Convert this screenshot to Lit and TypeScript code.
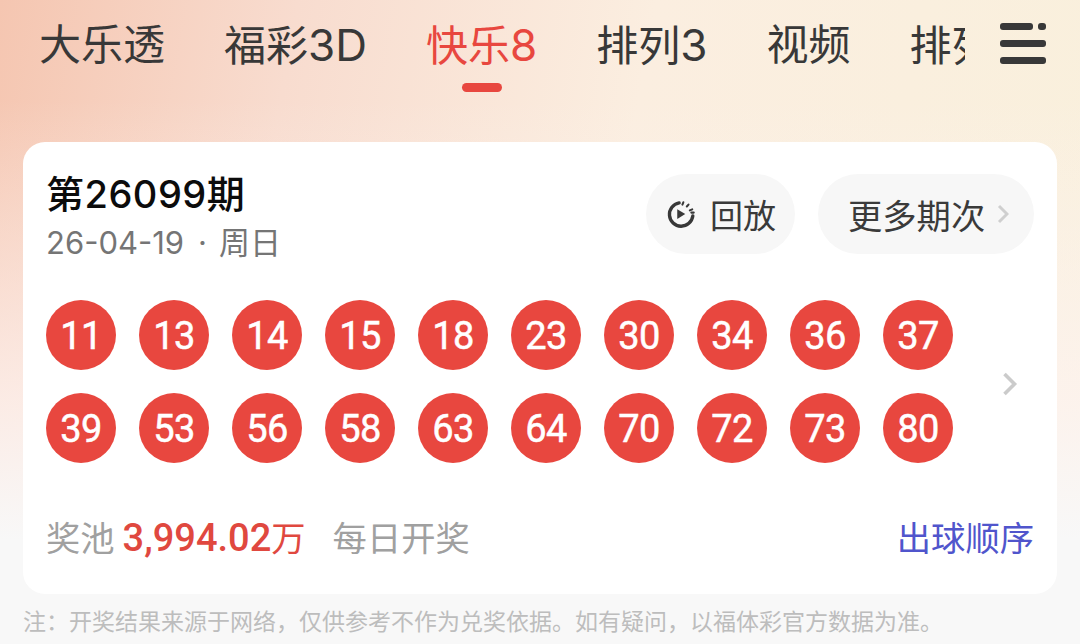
import { LitElement, html, css, svg } from "lit";
import { customElement } from "lit/decorators.js";

const TABS = [
  ["大乐透", ""],
  ["福彩", "3D"],
  ["快乐", "8"],
  ["排列", "3"],
  ["视频", ""],
  ["排列", "5"],
];
const ROWS = [
  ["11", "13", "14", "15", "18", "23", "30", "34", "36", "37"],
  ["39", "53", "56", "58", "63", "64", "70", "72", "73", "80"],
];

@customElement("app-root")
export class AppRoot extends LitElement {
  static styles = css`
    :host {
      display: block;
      width: 1080px;
      height: 644px;
      overflow: hidden;
      font-family: "Inter", "Noto Sans CJK SC", "Noto Sans", sans-serif;
      background:
        linear-gradient(180deg, rgba(253, 243, 240, 0) 100px, rgba(253, 243, 240, 0.8) 400px, #f8f8f8 540px),
        linear-gradient(100deg, #f5c6b1 0%, #f8dccf 25%, #fbeee0 55%, #f9f0dc 100%);
      background-color: #f8f8f8;
    }
    .header {
      height: 142px;
      display: flex;
      align-items: flex-start;
    }
    .tabs {
      width: 965px;
      padding-left: 39px;
      box-sizing: border-box;
      display: flex;
      gap: 59px;
      overflow: hidden;
      flex: none;
      height: 100px;
    }
    .tab {
      flex: none;
      display: flex;
      flex-direction: column;
      align-items: center;
      font-size: 42px;
      line-height: 50px;
      padding-top: 20px;
      color: #383838;
      white-space: nowrap;
    }
    .lat { font-size: 44px; }
    .tab.on { color: #e8473f; }
    .bar {
      width: 40px;
      height: 9px;
      border-radius: 5px;
      background: #e8473f;
      margin-top: 12px;
    }
    .menu {
      margin: 23px 0 0 35px;
      width: 46px;
      height: 41px;
      display: block;
      flex: none;
    }
    .card {
      margin: 0 23px;
      height: 452px;
      box-sizing: border-box;
      background: #fff;
      border-radius: 22px;
      padding: 29px 23px 0 23px;
      display: flex;
      flex-direction: column;
    }
    .top {
      display: flex;
      justify-content: space-between;
      height: 129px;
      flex: none;
    }
    .title {
      font-size: 38px;
      line-height: 46px;
      letter-spacing: 0.5px;
      color: #0c0c0c;
      font-weight: 500;
    }
    .date {
      font-size: 31px;
      line-height: 44px;
      color: #757575;
      margin-top: 4px;
    }
    .dot { margin: 0 12px 0 14px; }
    .actions { display: flex; gap: 23px; padding-top: 3px; }
    .pill {
      height: 80px;
      border-radius: 40px;
      background: #f7f7f7;
      display: flex;
      align-items: center;
      box-sizing: border-box;
      font-size: 33px;
      color: #3a3a3a;
    }
    .replay { width: 149px; padding-left: 20px; gap: 14px; }
    .more { width: 216px; padding-left: 30px; gap: 12px; font-size: 34.3px; }
    .mid { display: flex; flex: none; height: 163px; }
    .balls {
      display: flex;
      flex-direction: column;
      gap: 23px;
      flex: none;
    }
    .row { display: flex; gap: 23px; }
    .ball {
      width: 70px;
      height: 70px;
      box-sizing: border-box;
      padding-top: 2px;
      border-radius: 50%;
      background: #e8473f;
      color: #fff;
      font-family: "Roboto", sans-serif;
      font-size: 38px;
      letter-spacing: -0.6px;
      font-weight: 400;
      -webkit-text-stroke: 0.5px #fff;
      display: flex;
      align-items: center;
      justify-content: center;
    }
    .next { margin: 72px 0 0 49px; display: block; flex: none; }
    .bottom {
      margin-top: 48px;
      display: flex;
      align-items: center;
      justify-content: space-between;
      height: 50px;
      font-size: 34.3px;
      color: #a0a0a0;
    }
    .pool { display: flex; align-items: center; white-space: nowrap; }
    .amount {
      color: #e0483f;
      margin-left: 8px;
      display: flex;
      align-items: center;
    }
    .num {
      font-family: "Roboto", sans-serif;
      font-weight: 500;
      font-size: 38px;
      margin-top: 3px;
    }
    .daily { margin-left: 27px; }
    .order { color: #5055cc; }
    .note {
      margin: 11px 0 0 23px;
      font-size: 23px;
      line-height: 34px;
      color: #bdbdbd;
      white-space: nowrap;
    }
  `;

  private playIcon() {
    return html`<svg width="30" height="30" viewBox="0 0 32 32" fill="none">
      ${svg`<path d="M14 4.2A12.5 12.5 0 1 0 28.6 18" stroke="#383838" stroke-width="3.6" stroke-linecap="round"/>
      <path d="M18.5 3.5l-1 2.5M24 6l-1.8 2M28 11l-2.6 1.2M29.6 14.5h-2.6" stroke="#383838" stroke-width="2.2" stroke-linecap="round"/>
      <path d="M12 10.8l8.5 5.2-8.5 5.2z" fill="#383838"/>`}
    </svg>`;
  }

  render() {
    return html`
      <div class="header">
        <div class="tabs">
          ${TABS.map(
            ([cn, lat], i) => html`<div class="tab ${i === 2 ? "on" : ""}">
              <span>${cn}${lat ? html`<span class="lat">${lat}</span>` : ""}</span>
              ${i === 2 ? html`<div class="bar"></div>` : ""}
            </div>`
          )}
        </div>
        <svg class="menu" viewBox="0 0 46 41">
          <rect x="0" y="0" width="33" height="7" rx="3" fill="#383838"/>
          <rect x="38" y="0" width="8" height="7" rx="3" fill="#383838"/>
          <rect x="0" y="17" width="46" height="7" rx="3" fill="#383838"/>
          <rect x="0" y="34" width="46" height="7" rx="3" fill="#383838"/>
        </svg>
      </div>
      <div class="card">
        <div class="top">
          <div>
            <div class="title">第26099期</div>
            <div class="date">26-04-19<span class="dot">·</span>周日</div>
          </div>
          <div class="actions">
            <div class="pill replay">${this.playIcon()}<span>回放</span></div>
            <div class="pill more">
              <span>更多期次</span>
              <svg width="12" height="20" viewBox="0 0 12 20" fill="none">
                <path d="M2 2l8 8-8 8" stroke="#cfcfcf" stroke-width="3"/>
              </svg>
            </div>
          </div>
        </div>
        <div class="mid">
          <div class="balls">
            ${ROWS.map(
              (r) => html`<div class="row">${r.map((n) => html`<div class="ball">${n}</div>`)}</div>`
            )}
          </div>
          <svg class="next" width="16" height="24" viewBox="0 0 16 24" fill="none">
            <path d="M2.5 2l10 10-10 10" stroke="#cbcbcb" stroke-width="3.6"/>
          </svg>
        </div>
        <div class="bottom">
          <div class="pool">
            <span>奖池</span>
            <span class="amount"><span class="num">3,994.02</span><span>万</span></span>
            <span class="daily">每日开奖</span>
          </div>
          <div class="order">出球顺序</div>
        </div>
      </div>
      <div class="note">注：开奖结果来源于网络，仅供参考不作为兑奖依据。如有疑问，以福体彩官方数据为准。</div>
    `;
  }
}
